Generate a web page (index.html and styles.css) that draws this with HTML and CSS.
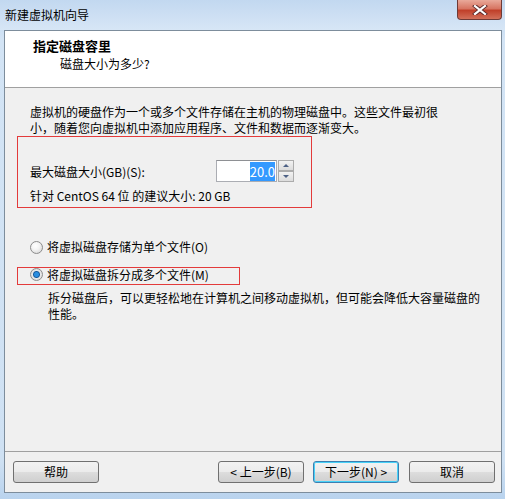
FILE: index.html
```html
<!DOCTYPE html>
<html lang="zh-CN">
<head>
<meta charset="UTF-8">
<title>新建虚拟机向导</title>
<link rel="stylesheet" href="styles.css">
</head>
<body>
<div class="window">
    <div class="titlebar">
        <span class="title">新建虚拟机向导</span>
        <div class="close">
            <svg width="16" height="10" viewBox="0 0 16 10">
                <path d="M3 1 L13 9 M13 1 L3 9" stroke="#5a2a2a" stroke-width="4" stroke-linecap="square"/>
                <path d="M3 1 L13 9 M13 1 L3 9" stroke="#fff" stroke-width="2.2" stroke-linecap="square"/>
            </svg>
        </div>
    </div>
    <div class="client">
        <div class="header">
            <div class="head-title">指定磁盘容里</div>
            <div class="head-sub">磁盘大小为多少?</div>
        </div>
        <div class="content">
            <p class="intro">虚拟机的硬盘作为一个或多个文件存储在主机的物理磁盘中。这些文件最初很<br>小，随着您向虚拟机中添加应用程序、文件和数据而逐渐变大。</p>
            <div class="group">
                <div class="size-row">
                    <span>最大磁盘大小(GB)(S):</span>
                    <div class="spin">
                        <div class="spin-field"><span class="sel">20.0</span></div>
                        <div class="spin-btns">
                            <div class="spin-btn"><span class="arrow up"></span></div>
                            <div class="spin-btn"><span class="arrow down"></span></div>
                        </div>
                    </div>
                </div>
                <div class="hint">针对 CentOS 64 位 的建议大小: 20 GB</div>
            </div>
            <div class="radio-row">
                <span class="radio"></span>
                <span>将虚拟磁盘存储为单个文件(O)</span>
            </div>
            <div class="radio-row marked">
                <span class="radio checked"></span>
                <span>将虚拟磁盘拆分成多个文件(M)</span>
            </div>
            <p class="desc">拆分磁盘后，可以更轻松地在计算机之间移动虚拟机，但可能会降低大容量磁盘的<br>性能。</p>
        </div>
        <div class="footer">
            <button class="btn">帮助</button>
            <div class="spacer"></div>
            <button class="btn">&lt; 上一步(B)</button>
            <button class="btn default">下一步(N) &gt;</button>
            <button class="btn last">取消</button>
        </div>
    </div>
</div>
</body>
</html>
```

FILE: styles.css
```css
body {
    margin: 0;
    font-family: "Noto Sans CJK SC", "Liberation Sans", sans-serif;
    font-size: 12px;
    color: #000;
}
.window {
    width: 505px;
    height: 499px;
    background: linear-gradient(to bottom, #bcd4ee 0%, #d3e4f5 40px, #cfe1f3 460px, #b9d3ee 100%);
    overflow: hidden;
}
.titlebar {
    height: 30px;
    display: flex;
    align-items: flex-start;
    background: linear-gradient(to bottom, #c2d8f0, #d7e6f6);
}
.title {
    margin-left: 5px;
    margin-top: 7px;
    line-height: 16px;
}
.close {
    margin-left: auto;
    margin-right: 3px;
    width: 45px;
    height: 20px;
    box-sizing: border-box;
    border: 1px solid #6e3a36;
    border-top: none;
    border-radius: 0 0 4px 4px;
    background: linear-gradient(to bottom, #e9a99a 0%, #d77562 45%, #c0402a 55%, #d2705a 100%);
    display: flex;
    align-items: center;
    justify-content: center;
}
.client {
    margin: 0 3px 0 4px;
    height: 463px;
    box-sizing: border-box;
    border: 1px solid #7d8d9c;
    background: #f0f0f0;
    display: flex;
    flex-direction: column;
}
.header {
    height: 56px;
    background: #fff;
    border-bottom: 1px solid #a0a0a0;
}
.head-title {
    font-weight: bold;
    font-size: 13px;
    margin: 7px 0 0 28px;
    line-height: 16px;
}
.head-sub {
    margin: 2px 0 0 55px;
    line-height: 16px;
}
.content {
    height: 364px;
    border-bottom: 1px solid #a0a0a0;
    padding: 16px 0 0 12px;
    box-sizing: border-box;
}
.intro {
    margin: 0;
    padding-left: 13px;
    line-height: 16px;
}
.group {
    width: 295px;
    height: 72px;
    box-sizing: border-box;
    border: 1px solid #e33b3b;
    padding: 23px 17px 0 12px;
}
.size-row {
    display: flex;
    justify-content: space-between;
    align-items: center;
    height: 22px;
}
.spin {
    display: flex;
}
.spin-field {
    width: 61px;
    height: 22px;
    box-sizing: border-box;
    border: 1px solid #abadb3;
    border-top-color: #8e9094;
    background: #fff;
    text-align: right;
    padding: 2px 1px 0 0;
    font-size: 13px;
    line-height: 17px;
}
.sel {
    background: #3399ff;
    color: #fff;
}
.spin-btns {
    display: flex;
    flex-direction: column;
    margin-left: 1px;
}
.spin-btn {
    width: 16px;
    height: 11px;
    box-sizing: border-box;
    border: 1px solid #acacac;
    background: linear-gradient(to bottom, #f2f2f2, #dcdcdc);
    display: flex;
    align-items: center;
    justify-content: center;
}
.arrow {
    width: 0;
    height: 0;
    border-left: 3px solid transparent;
    border-right: 3px solid transparent;
}
.arrow.up {
    border-bottom: 3px solid #4d6185;
}
.arrow.down {
    border-top: 3px solid #4d6185;
}
.hint {
    margin-top: 6px;
    line-height: 16px;
}
.radio-row {
    display: flex;
    align-items: center;
    gap: 4px;
    padding-left: 13px;
    margin-top: 31px;
    line-height: 16px;
}
.radio-row.marked {
    margin-top: 12px;
    width: 223px;
    height: 18px;
    box-sizing: border-box;
    border: 1px solid #e33b3b;
    padding-left: 12px;
    align-items: flex-start;
    line-height: 14px;
}
.radio {
    width: 11px;
    height: 11px;
    border-radius: 50%;
    border: 1px solid #8c8c8c;
    background: radial-gradient(circle at 40% 35%, #ffffff 0%, #f4f4f4 40%, #d0d0d0 100%);
    flex: none;
}
.radio.checked {
    background: radial-gradient(circle at 50% 50%, #2a8ee0 0 2px, #165a9e 3px, #e8e8e8 4px, #cfcfcf 100%);
}
.desc {
    margin: 5px 0 0 31px;
    line-height: 16px;
}
.footer {
    flex: 1;
    display: flex;
    align-items: flex-start;
    padding: 9px 6px 0 8px;
    gap: 9px;
}
.spacer {
    flex: 1;
}
.btn {
    width: 86px;
    height: 22px;
    font-family: inherit;
    font-size: 12px;
    border: 1px solid #707070;
    border-radius: 3px;
    background: linear-gradient(to bottom, #f2f2f2 0%, #ebebeb 50%, #dddddd 50%, #cfcfcf 100%);
    padding: 0;
    line-height: 18px;
}
.btn.default {
    border-color: #3c7fb1;
    box-shadow: inset 0 0 0 1px #48d2f8;
}
.btn.last {
    margin-left: 1px;
}
```
